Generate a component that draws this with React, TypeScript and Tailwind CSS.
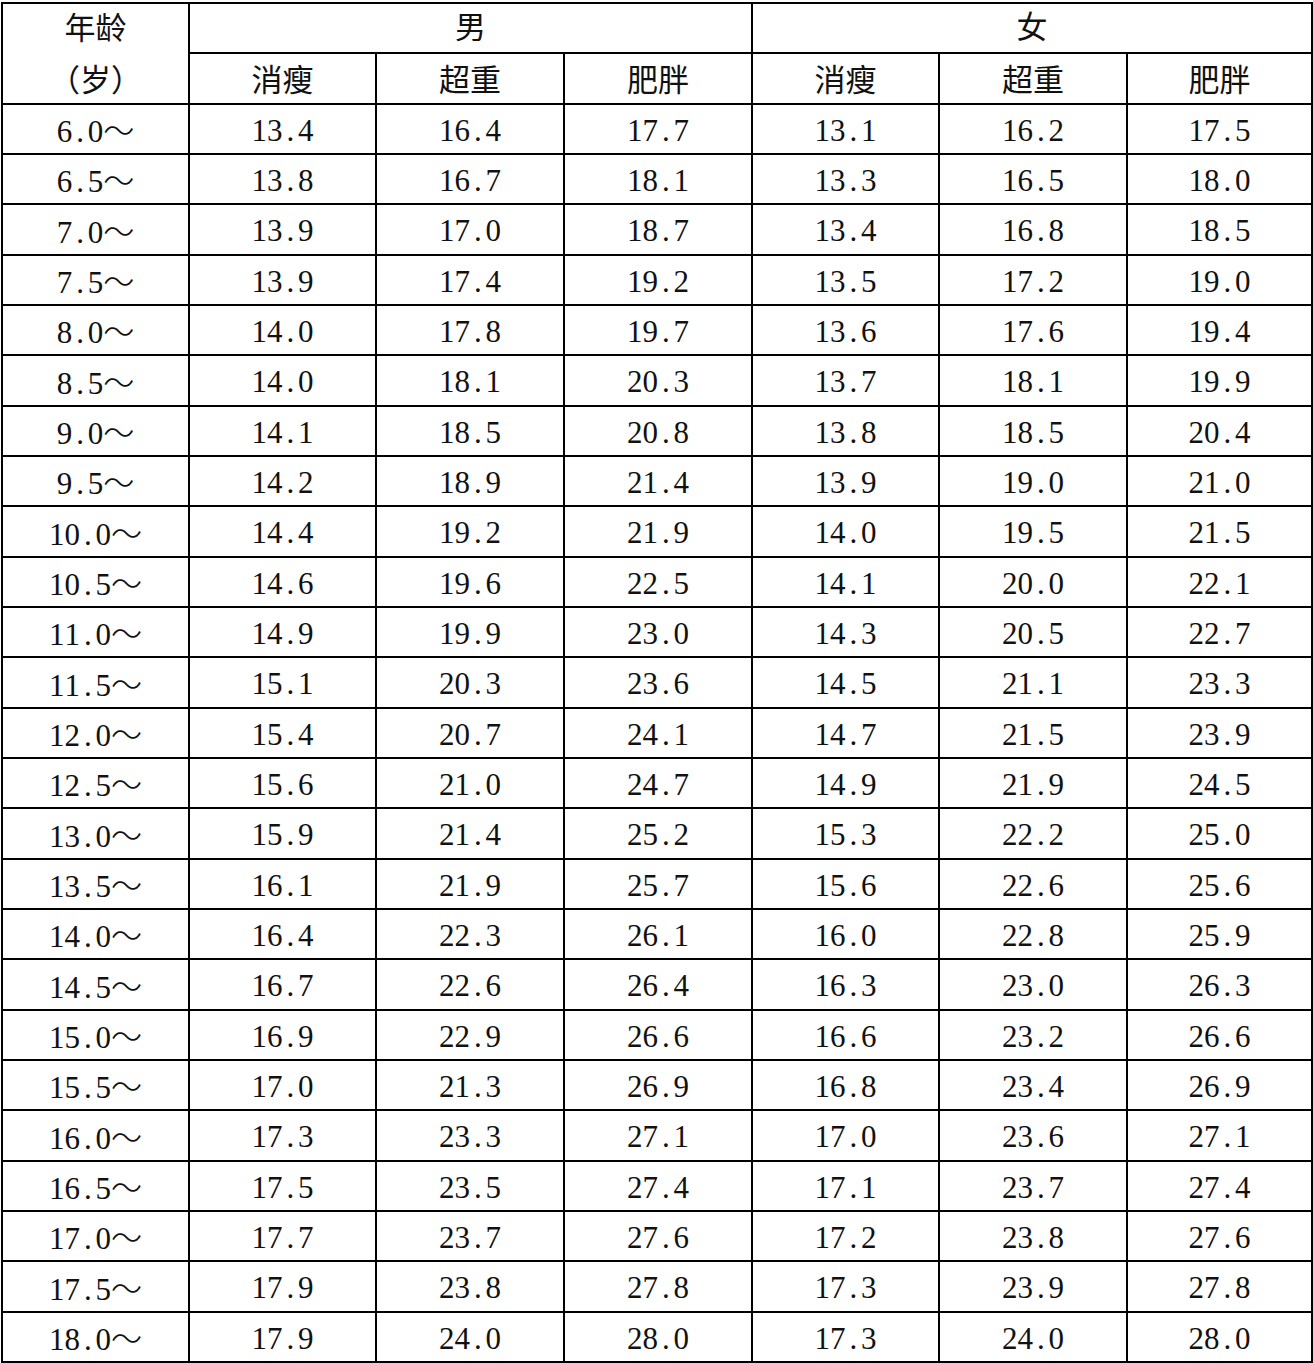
import React from "react";

const rows: string[][] = [
  ["6.0～", "13.4", "16.4", "17.7", "13.1", "16.2", "17.5"],
  ["6.5～", "13.8", "16.7", "18.1", "13.3", "16.5", "18.0"],
  ["7.0～", "13.9", "17.0", "18.7", "13.4", "16.8", "18.5"],
  ["7.5～", "13.9", "17.4", "19.2", "13.5", "17.2", "19.0"],
  ["8.0～", "14.0", "17.8", "19.7", "13.6", "17.6", "19.4"],
  ["8.5～", "14.0", "18.1", "20.3", "13.7", "18.1", "19.9"],
  ["9.0～", "14.1", "18.5", "20.8", "13.8", "18.5", "20.4"],
  ["9.5～", "14.2", "18.9", "21.4", "13.9", "19.0", "21.0"],
  ["10.0～", "14.4", "19.2", "21.9", "14.0", "19.5", "21.5"],
  ["10.5～", "14.6", "19.6", "22.5", "14.1", "20.0", "22.1"],
  ["11.0～", "14.9", "19.9", "23.0", "14.3", "20.5", "22.7"],
  ["11.5～", "15.1", "20.3", "23.6", "14.5", "21.1", "23.3"],
  ["12.0～", "15.4", "20.7", "24.1", "14.7", "21.5", "23.9"],
  ["12.5～", "15.6", "21.0", "24.7", "14.9", "21.9", "24.5"],
  ["13.0～", "15.9", "21.4", "25.2", "15.3", "22.2", "25.0"],
  ["13.5～", "16.1", "21.9", "25.7", "15.6", "22.6", "25.6"],
  ["14.0～", "16.4", "22.3", "26.1", "16.0", "22.8", "25.9"],
  ["14.5～", "16.7", "22.6", "26.4", "16.3", "23.0", "26.3"],
  ["15.0～", "16.9", "22.9", "26.6", "16.6", "23.2", "26.6"],
  ["15.5～", "17.0", "21.3", "26.9", "16.8", "23.4", "26.9"],
  ["16.0～", "17.3", "23.3", "27.1", "17.0", "23.6", "27.1"],
  ["16.5～", "17.5", "23.5", "27.4", "17.1", "23.7", "27.4"],
  ["17.0～", "17.7", "23.7", "27.6", "17.2", "23.8", "27.6"],
  ["17.5～", "17.9", "23.8", "27.8", "17.3", "23.9", "27.8"],
  ["18.0～", "17.9", "24.0", "28.0", "17.3", "24.0", "28.0"],
];

function Mono({ text }: { text: string }) {
  return (
    <span className="inline-flex items-baseline">
      {text.split("").map((c, i) =>
        c === "～" ? (
          <span
            key={i}
            className="inline-block w-[31px] text-center font-['Noto_Sans_CJK_SC',sans-serif] font-light"
          >
            {c}
          </span>
        ) : (
          <span key={i} className="inline-block w-[15.5px] text-center">
            {c}
          </span>
        )
      )}
    </span>
  );
}

const cell = "bg-white flex items-center justify-center text-[#111]";
const cjk = "font-['Noto_Sans_CJK_SC',sans-serif] text-[31px] font-normal";
const num = "font-['Liberation_Serif',serif] text-[31px] pt-[4px]";

export default function App() {
  return (
    <div className="w-[1313px] h-[1363px] bg-white pt-[2px] pl-[1px]">
      <div className="grid grid-cols-[185px_185px_186px_186px_185px_186px_183px] grid-rows-[repeat(27,minmax(0,1fr))] gap-[2px] p-[2px] bg-black w-[1312px] h-[1361px]">
        <div className={`${cell} row-span-2 flex-col`}>
          <div className={`${cjk} h-1/2 flex items-center justify-center pb-[4px]`}>年龄</div>
          <div className={`${cjk} h-1/2 flex items-center justify-center`}>（岁）</div>
        </div>
        <div className={`${cell} ${cjk} col-span-3 pb-[6px]`}>男</div>
        <div className={`${cell} ${cjk} col-span-3 pb-[6px]`}>女</div>
        {["消瘦", "超重", "肥胖", "消瘦", "超重", "肥胖"].map((h, i) => (
          <div key={i} className={`${cell} ${cjk}`}>
            {h}
          </div>
        ))}
        {rows.map((r, ri) =>
          r.map((v, ci) => (
            <div key={`${ri}-${ci}`} className={`${cell} ${num}`}>
              <Mono text={v} />
            </div>
          ))
        )}
      </div>
    </div>
  );
}
